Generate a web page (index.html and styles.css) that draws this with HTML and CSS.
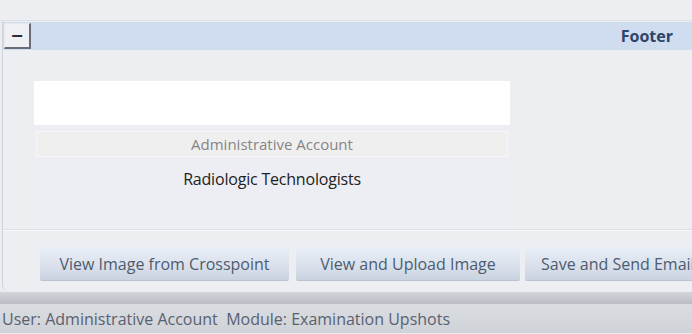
FILE: index.html
```html
<!DOCTYPE html>
<html lang="en"><head>
  <meta charset="UTF-8"><meta name="viewport" content="width=device-width, initial-scale=1.0">
  <title>Examination Upshots</title>
  <link rel="stylesheet" href="styles.css">
</head><body>

<div class="topbar"></div>

<div class="panel">
  <div class="section-head">
    <button class="collapse">&minus;</button>
    <span class="section-title">Footer</span>
  </div>

  <div class="section-body">
    <div class="sig-col">
      <div class="sig-box"></div>
      <div class="sig-name">Administrative Account</div>
      <div class="sig-role">Radiologic Technologists</div>
    </div>
  </div>

  <div class="actions">
    <button class="act act-wide">View Image from Crosspoint</button>
    <button class="act act-mid">View and Upload Image</button>
    <button class="act act-last">Save and Send Email</button>
  </div>
</div>

<div class="shade"></div>
<div class="status">User: Administrative Account&nbsp; Module: Examination Upshots</div>

</body></html>
```

FILE: styles.css
```css
body{margin:0;background:#eaedf1;font-family:'Open Sans','Noto Sans',sans-serif;width:692px;height:334px;overflow:hidden;}
.topbar{height:20px;background:#eceef1;border-bottom:1px solid #dde1e6;}

.panel{margin-left:2px;border-left:1px solid #cfd3d9;border-bottom-left-radius:6px;background:#eceef2;padding-bottom:11px;overflow:hidden;}
.section-head{height:28px;margin-top:1px;background:#d0dcef;display:flex;align-items:center;justify-content:space-between;}
.collapse{width:27px;height:26px;margin-left:1px;padding:0;background:#eef0f4;border:1px solid #e4e7ec;border-right:2px solid #676d78;border-bottom:2px solid #676d78;color:#2a2e36;font-size:16px;font-weight:700;line-height:20px;font-family:'DejaVu Sans',sans-serif;}
.section-title{font-size:16px;font-weight:700;color:#2d4566;margin-right:19px;}

.section-body{height:179px;padding-left:31px;padding-top:31px;box-sizing:border-box;}
.sig-col{width:476px;height:148px;background:#edeef4;}
.sig-box{height:44px;background:#fff;}
.sig-name{margin:6px 2px 0;height:24px;background:#efefef;border:1px solid #f6f6f6;color:#858585;font-size:15px;line-height:24px;text-align:center;}
.sig-role{margin-top:11px;text-align:center;color:#222;font-size:16px;letter-spacing:-0.2px;}

.actions{border-top:1px solid #dde1e6;box-shadow:inset 0 1px 0 #f6f7f9;padding:17px 0 0 37px;display:flex;gap:6px;white-space:nowrap;}
.act{height:33px;border:none;border-radius:2px;background:linear-gradient(#e9eef5,#d9e0eb 60%,#c9d2e0);box-shadow:0 1px 0 #b9c2d0;color:#4d5c70;font-family:'Open Sans','Noto Sans',sans-serif;font-size:16px;padding:0;flex-shrink:0;}
.act-wide{width:249px;}
.act-mid{width:224px;margin-left:1px;}
.act-last{width:220px;margin-left:-1px;text-align:left;padding-left:16px;}

.shade{height:12px;background:linear-gradient(#d2d5da,#b9bdc3);margin-top:1px;}
.status{height:29px;background:linear-gradient(#dadde2,#cfd2d7);color:#596170;font-size:16px;line-height:30px;padding-left:2px;}
```
